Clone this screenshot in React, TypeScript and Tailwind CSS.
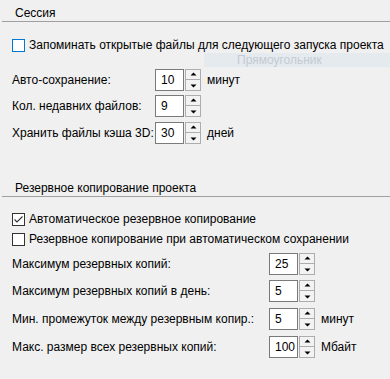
import React from "react";

const font = { fontFamily: '"Liberation Sans", Arial, sans-serif' };

function Arrow({ up }: { up?: boolean }) {
  return (
    <svg width="7" height="5" viewBox="0 0 7 5">
      {up ? (
        <path d="M3.5 0.5 L6.5 3.5 L0.5 3.5 Z" fill="#000" />
      ) : (
        <path d="M0.5 1.5 L6.5 1.5 L3.5 4.5 Z" fill="#000" />
      )}
    </svg>
  );
}

function Spin({ value }: { value: string }) {
  return (
    <div className="flex h-[22px] shrink-0">
      <div className="w-[29px] h-full bg-white border border-[#7a7a7a] pl-[5px] text-[12px] leading-[20px] text-black">
        {value}
      </div>
      <div className="ml-[1px] w-[16px] h-full flex flex-col">
        <div className="h-[11px] border border-[#adadad] bg-[#f3f3f3] flex items-center justify-center">
          <Arrow up />
        </div>
        <div className="h-[11px] border border-[#adadad] border-t-0 bg-[#f3f3f3] flex items-center justify-center">
          <Arrow />
        </div>
      </div>
    </div>
  );
}

function Row({ label, value, unit, inputX, className }: { label: string; value: string; unit?: string; inputX: string; className?: string }) {
  return (
    <div className={`flex items-center h-[22px] pl-[12px] whitespace-nowrap ${className ?? ""}`}>
      <div className={`shrink-0 ${inputX}`}>{label}</div>
      <Spin value={value} />
      {unit && <div className="ml-[6px]">{unit}</div>}
    </div>
  );
}

function Check({ label, checked, focus, className }: { label: string; checked?: boolean; focus?: boolean; className?: string }) {
  return (
    <div className={`flex items-center h-[16px] pl-[12px] whitespace-nowrap ${className ?? ""}`}>
      <div
        className={`shrink-0 w-[13px] h-[13px] bg-white border flex items-center justify-center ${
          focus ? "border-[#0078d7]" : "border-[#333333]"
        }`}
      >
        {checked && (
          <svg width="11" height="11" viewBox="0 0 11 11">
            <path d="M1.5 5.5 L4 8 L9.5 2.5" fill="none" stroke="#333" strokeWidth="1.1" />
          </svg>
        )}
      </div>
      <div className="ml-[4px]">{label}</div>
    </div>
  );
}

function Header({ title, className }: { title: string; className?: string }) {
  return (
    <div className={`ml-[2px] pt-[5px] pl-[13px] leading-[16px] border-b border-[#a0a0a0] ${className ?? ""}`}>
      {title}
    </div>
  );
}

export default function App() {
  return (
    <div className="relative w-[390px] h-[379px] bg-[#f0f0f0] overflow-hidden text-[12px] text-black" style={font}>
      {/* ghost rectangle behind the form */}
      <div className="absolute left-[204px] top-[53px] w-[186px] h-[14px] bg-[#e5eaef] text-[#c4cad1] pl-[33px] leading-[14px]">
        Прямоугольник
      </div>

      <div className="relative flex flex-col">
        <Header title="Сессия" />
        <Check label="Запоминать открытые файлы для следующего запуска проекта" focus className="mt-[15px]" />
        <Row label="Авто-сохранение:" value="10" unit="минут" inputX="w-[143px]" className="mt-[16px]" />
        <Row label="Кол. недавних файлов:" value="9" inputX="w-[143px]" className="mt-[4px]" />
        <Row label="Хранить файлы кэша 3D:" value="30" unit="дней" inputX="w-[143px]" className="mt-[5px]" />

        <Header title="Резервное копирование проекта" className="mt-[31px]" />
        <Check label="Автоматическое резервное копирование" checked className="mt-[14px]" />
        <Check label="Резервное копирование при автоматическом сохранении" className="mt-[4px]" />
        <Row label="Максимум резервных копий:" value="25" inputX="w-[257px]" className="mt-[6px]" />
        <Row label="Максимум резервных копий в день:" value="5" inputX="w-[257px]" className="mt-[5px]" />
        <Row label="Мин. промежуток между резервным копир.:" value="5" unit="минут" inputX="w-[257px]" className="mt-[6px]" />
        <Row label="Макс. размер всех резервных копий:" value="100" unit="Мбайт" inputX="w-[257px]" className="mt-[6px]" />
      </div>
    </div>
  );
}
